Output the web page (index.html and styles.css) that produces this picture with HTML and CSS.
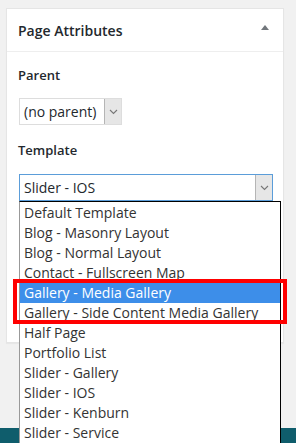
FILE: index.html
```html
<!DOCTYPE html>
<html lang="en">
<head>
    <meta charset="UTF-8">
    <meta name="viewport" content="width=device-width, initial-scale=1.0">
    <title>Page Attributes</title>
    <link rel="stylesheet" href="styles.css">
</head>
<body>

    <div class="postbox">
        <div class="box-header">
            <h2>Page Attributes</h2>
            <span class="toggle"></span>
        </div>

        <div class="box-inside">
            <p class="label">Parent</p>
            <div class="select parent-select">
                <span class="select-text">(no parent)</span>
                <span class="select-arrow">
                    <svg width="9" height="6" viewBox="0 0 9 6"><path d="M1 1 L4.5 4.5 L8 1" fill="none" stroke="#777" stroke-width="1.1"/></svg>
                </span>
            </div>

            <p class="label">Template</p>
            <div class="select-wrap">
                <div class="select template-select">
                    <span class="select-text">Slider - IOS</span>
                    <span class="select-arrow">
                        <svg width="9" height="6" viewBox="0 0 9 6"><path d="M1 1 L4.5 4.5 L8 1" fill="none" stroke="#777" stroke-width="1.1"/></svg>
                    </span>
                </div>

                <ul class="dropdown">
                    <li>Default Template</li>
                    <li>Blog - Masonry Layout</li>
                    <li>Blog - Normal Layout</li>
                    <li>Contact - Fullscreen Map</li>
                    <li class="selected">Gallery - Media Gallery</li>
                    <li>Gallery - Side Content Media Gallery</li>
                    <li>Half Page</li>
                    <li>Portfolio List</li>
                    <li>Slider - Gallery</li>
                    <li>Slider - IOS</li>
                    <li>Slider - Kenburn</li>
                    <li>Slider - Service</li>
                </ul>

                <!-- red annotation round the two gallery rows -->
                <div class="highlight-box"></div>
            </div>
        </div>
    </div>

    <div class="footer-bar"></div>

</body>
</html>
```

FILE: styles.css
```css
body {
    margin: 0;
    padding: 8px 0 0 6px;
    background-color: #f1f1f1;
    font-family: "Open Sans", sans-serif;
    color: #23282d;
    min-height: 443px;
    box-sizing: border-box;
    display: flex;
    flex-direction: column;
}
.postbox {
    width: 278px;
    height: 335px;
    background-color: #fff;
    border: 1px solid #e5e5e5;
    box-sizing: border-box;
    box-shadow: 0 1px 1px rgba(0, 0, 0, 0.04);
}
.box-header {
    height: 42px;
    border-bottom: 1px solid #eee;
    display: flex;
    align-items: center;
    justify-content: space-between;
    padding: 0 14px 0 11px;
}
.box-header h2 {
    margin: 0;
    font-size: 14px;
    font-weight: 600;
    padding-top: 1px;
}
.toggle {
    width: 0;
    height: 0;
    border-left: 4px solid transparent;
    border-right: 4px solid transparent;
    border-bottom: 5px solid #72777c;
    margin-top: -6px;
}
.box-inside {
    padding: 13px 0 0 11px;
}
.label {
    margin: 0;
    font-size: 13px;
    font-weight: 600;
    line-height: 20px;
}
.select {
    height: 27px;
    border: 1px solid #ddd;
    box-sizing: border-box;
    display: flex;
    align-items: center;
    justify-content: space-between;
    background-color: #fff;
    font-size: 14px;
}
.select-text {
    padding-left: 4px;
}
.select-arrow {
    width: 17px;
    height: 25px;
    background-color: #e6e6e6;
    border-left: 1px solid #b5b5b5;
    box-sizing: border-box;
    display: flex;
    align-items: center;
    justify-content: center;
}
.parent-select {
    width: 103px;
    margin: 13px 0 15px 1px;
}
.select-wrap {
    position: relative;
    margin: 14px 0 0 1px;
    width: 254px;
}
.template-select {
    width: 254px;
    border-color: #5b9dd9;
}
.dropdown {
    position: absolute;
    top: 27px;
    left: 0;
    width: 262px;
    margin: 0;
    padding: 0;
    list-style: none;
    background-color: #fff;
    border: 1px solid #000;
    border-left-color: #999;
    box-sizing: border-box;
    padding-top: 1px;
}
.dropdown li {
    height: 20px;
    line-height: 20px;
    font-size: 14px;
    padding-left: 4px;
    color: #333;
    white-space: nowrap;
}
.dropdown li.selected {
    background-color: #3d8ee9;
    color: #fff;
}
.highlight-box {
    position: absolute;
    top: 105px;
    left: -6px;
    width: 274px;
    height: 45px;
    border: 4px solid #f00;
    box-sizing: border-box;
}
.footer-bar {
    margin: auto 0 0 -6px;
    height: 15px;
    background-color: #0f5d6c;
}
```
